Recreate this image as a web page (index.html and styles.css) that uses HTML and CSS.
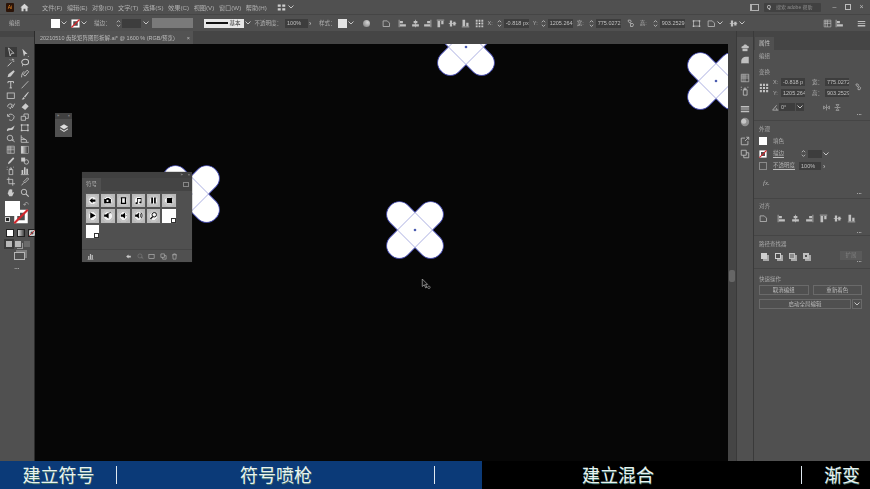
FILE: index.html
```html
<!DOCTYPE html>
<html lang="zh-CN">
<head>
    <meta charset="UTF-8">
    <meta name="viewport" content="width=device-width, initial-scale=1.0">
    <title>Illustrator 符号</title>
    <link rel="stylesheet" href="styles.css">
</head>
<body>
    <svg class="defs" width="0" height="0" aria-hidden="true">
        <!-- 画布上的四瓣图形 -->
        <symbol id="clover" viewBox="-29 -29 58 58">
            <g fill="#fff" stroke="#4c52b4" stroke-width="1.1">
                <rect x="-34.500" y="-12.400" width="69" height="24.800" rx="11.800" transform="rotate(45)"/>
                <rect x="-34.500" y="-12.400" width="69" height="24.800" rx="11.800" transform="rotate(-45)"/>
            </g>
            <g fill="#fff">
                <rect x="-34" y="-11.900" width="68" height="23.800" rx="11.300" transform="rotate(45)"/>
                <rect x="-34" y="-11.900" width="68" height="23.800" rx="11.300" transform="rotate(-45)"/>
            </g>
            <path d="M0 -17.500 17.500 0 0 17.500 -17.500 0Z" fill="#fff" stroke="#a2a6dc" stroke-width="0.9"/>
            <circle r="1.300" fill="#4a5cb0"/>
        </symbol>

        <!-- 工具栏 -->
        <symbol id="t-select" viewBox="0 0 12 12"><path d="M3 1 9.500 7.500H6.600L5 10.800 3 1Z" fill="none" stroke="currentColor"/></symbol>
        <symbol id="t-direct" viewBox="0 0 12 12"><path d="M3 1 9.500 7.500H6.600L5 10.800Z" fill="currentColor"/><path d="M10 10h1v1h-1z" fill="currentColor"/></symbol>
        <symbol id="t-wand" viewBox="0 0 12 12"><path d="M2 10.500 7 5.500M8 1v2M10.500 4H8.500M5 2l1 1M10 1.500 9 2.500" fill="none" stroke="currentColor" stroke-width="1.200"/></symbol>
        <symbol id="t-lasso" viewBox="0 0 12 12"><ellipse cx="6.500" cy="5" rx="4.300" ry="3.400" fill="none" stroke="currentColor" stroke-width="1.300"/><path d="M3.500 7 3 10.500" stroke="currentColor"/></symbol>
        <symbol id="t-pen" viewBox="0 0 12 12"><path d="M9.500 1.500 11 3 6 9.500 2 10.500 3 6.500Z" fill="currentColor"/></symbol>
        <symbol id="t-curve" viewBox="0 0 12 12"><path d="M9 1.500 11 3.500 6.500 9 4 7ZM2 10.500C2 7 3 5 5 3" fill="none" stroke="currentColor" stroke-width="1.100"/></symbol>
        <symbol id="t-type" viewBox="0 0 12 12"><path d="M2.500 2h7v2M6 2v8M4.500 10h3M2.500 4V2" fill="none" stroke="currentColor" stroke-width="1.200"/></symbol>
        <symbol id="t-line" viewBox="0 0 12 12"><path d="M2 10.500 10.500 1.500" stroke="currentColor"/></symbol>
        <symbol id="t-rect" viewBox="0 0 12 12"><rect x="1.500" y="2.500" width="9" height="7" fill="none" stroke="currentColor"/></symbol>
        <symbol id="t-brush" viewBox="0 0 12 12"><path d="M10.500 1 5 7 6.500 8.200 11 2Z M4.500 7.600 6 9C5.500 10.500 3.500 11 2 10.600 3.200 10 3.500 8.600 4.500 7.600Z" fill="currentColor"/></symbol>
        <symbol id="t-shaper" viewBox="0 0 12 12"><path d="M2 6a3.500 3.500 0 0 1 6-2.500L5.500 8.500 3.500 6.500M8 7.500 11 2" fill="none" stroke="currentColor" stroke-width="1.100"/></symbol>
        <symbol id="t-eraser" viewBox="0 0 12 12"><path d="M7 1.500 11 5.500 6.500 10 2 6.500Z" fill="currentColor"/></symbol>
        <symbol id="t-rotate" viewBox="0 0 12 12"><path d="M2.500 5a4 4 0 1 1 1.500 5M2 2.500V5.500H5" fill="none" stroke="currentColor"/></symbol>
        <symbol id="t-scale" viewBox="0 0 12 12"><path d="M1.500 5.500h5.500v5h-5.500zM5 5V2.500H10.500V8H7.500" fill="none" stroke="currentColor"/></symbol>
        <symbol id="t-warp" viewBox="0 0 12 12"><path d="M1 9C3 5 5 8 7 6L11 3 9 8C7 10 4 8 2 10.500Z" fill="currentColor"/></symbol>
        <symbol id="t-free" viewBox="0 0 12 12"><path d="M2 2.500h8v7H2z" fill="none" stroke="currentColor"/><path d="M1 1.500h2v2H1zM9 1.500h2v2H9zM1 8.500h2v2H1zM9 8.500h2v2H9z" fill="currentColor"/></symbol>
        <symbol id="t-builder" viewBox="0 0 12 12"><circle cx="5" cy="5" r="3.500" fill="none" stroke="currentColor"/><path d="M7 7 11 10M8 8.500 10 7" stroke="currentColor"/></symbol>
        <symbol id="t-persp" viewBox="0 0 12 12"><path d="M1.500 1.500V10.500H11M1.500 4 8 7.500V10.500M1.500 7H7" fill="none" stroke="currentColor"/></symbol>
        <symbol id="t-mesh" viewBox="0 0 12 12"><path d="M1.500 1.500h9v9h-9zM1.500 6h9M6 1.500v9M1.500 3.700h9M3.700 1.500v9" fill="none" stroke="currentColor" stroke-width=".8"/></symbol>
        <symbol id="t-grad" viewBox="0 0 12 12"><defs><linearGradient id="gr"><stop offset="0" stop-color="#eee"/><stop offset="1" stop-color="#333"/></linearGradient></defs><rect x="1.500" y="1.500" width="9" height="9" fill="url(#gr)" stroke="#ccc" stroke-width=".6"/></symbol>
        <symbol id="t-dropper" viewBox="0 0 12 12"><path d="M9 1.500 10.500 3 5 9 2.500 10.500 3 8Z" fill="currentColor"/></symbol>
        <symbol id="t-blend" viewBox="0 0 12 12"><rect x="1.500" y="2" width="5" height="5" fill="currentColor"/><circle cx="8" cy="7.500" r="2.800" fill="none" stroke="currentColor"/></symbol>
        <symbol id="t-spray" viewBox="0 0 12 12"><path d="M4 4.500h4.500v6.500H4zM5 2.500h2v2H5z" fill="none" stroke="currentColor"/><path d="M1 1h1v1H1zM9 1h1v1H9zM1 4h1v1H1z" fill="currentColor"/></symbol>
        <symbol id="t-chart" viewBox="0 0 12 12"><path d="M1 11h10" stroke="currentColor"/><path d="M2 5h2v5.500H2zM5 1.500h2v9H5zM8 3.500h2v7H8z" fill="currentColor"/></symbol>
        <symbol id="t-board" viewBox="0 0 12 12"><path d="M3.500 .5V8.500H11.500M1 3H8.500V11" fill="none" stroke="currentColor"/></symbol>
        <symbol id="t-slice" viewBox="0 0 12 12"><path d="M9.500 1 11 2.500 6 7.500 4.500 6ZM5 7 2 10.500" fill="none" stroke="currentColor"/></symbol>
        <symbol id="t-hand" viewBox="0 0 12 12"><path d="M3 5V3h1v1.500V1.800h1.300V4.500V1.500h1.300v3V2h1.300v4L9.500 5 10 6 7.800 10.500H4.200L2 6.500Z" fill="currentColor"/></symbol>
        <symbol id="t-zoom" viewBox="0 0 12 12"><circle cx="5" cy="5" r="3.400" fill="none" stroke="currentColor" stroke-width="1.100"/><path d="M7.500 7.500 11 11" stroke="currentColor" stroke-width="1.400"/></symbol>
        <symbol id="t-trash" viewBox="0 0 12 12"><path d="M2 3h8M4.500 3V1.500h3V3M3 3 3.600 10.500H8.400L9 3" fill="none" stroke="currentColor"/></symbol>

        <!-- 面板栏 -->
        <symbol id="d-libs" viewBox="0 0 12 12"><path d="M2 7.500C1 5.500 3 4.500 4 4.800 4.500 2.500 8 2.500 8.500 4.500 10.500 4.200 11.500 6.500 10 7.500Z" fill="currentColor"/><rect x="3" y="8" width="6" height="3" fill="currentColor"/></symbol>
        <symbol id="d-layers" viewBox="0 0 12 12"><path d="M1.500 10.500V7C1.500 4 4 2 7 2H10.500V10.500Z" fill="currentColor"/><path d="M1.500 10.500h9" stroke="#505050"/></symbol>
        <symbol id="d-lines" viewBox="0 0 12 12"><path d="M1 2.500h10v1.600H1zM1 5.500h10v1H1zM1 8h10v2H1z" fill="currentColor"/></symbol>
        <symbol id="d-sphere" viewBox="0 0 12 12"><circle cx="6" cy="6" r="5" fill="#909090"/><circle cx="4.500" cy="5" r="3" fill="#c6c6c6"/></symbol>
        <symbol id="d-export" viewBox="0 0 12 12"><path d="M6 2.500H1.500V10.500H9.500V6M6 6 10.500 1.500M7.500 1.500H10.500V4.500" fill="none" stroke="currentColor"/></symbol>
        <symbol id="d-stack" viewBox="0 0 12 12"><path d="M1.500 1.500h6v6h-6zM4.500 7.500V10.500H10.500V4.500H7.500" fill="none" stroke="currentColor"/></symbol>
        <symbol id="d-flip-h" viewBox="0 0 12 12"><path d="M6 1v10M1 3.500 4.500 6 1 8.500ZM11 3.500 7.500 6 11 8.500Z" fill="none" stroke="currentColor"/></symbol>
        <symbol id="d-flip-v" viewBox="0 0 12 12"><path d="M1 6h10M3.500 1 6 4.500 8.500 1ZM3.500 11 6 7.500 8.500 11Z" fill="none" stroke="currentColor"/></symbol>
        <symbol id="d-angle" viewBox="0 0 12 12"><path d="M1 10.500H11M1 10.500 8 2M6.500 6.500C8 7.500 8.500 9 8.500 10.500" fill="none" stroke="currentColor" stroke-width="1.200"/></symbol>
        <symbol id="d-link" viewBox="0 0 12 12"><path d="M3 1.500h3l1 2-2 1.500-2-1.500zM6 7l2-1.500 2 1.500-1 3H6zM5 5l2 1.500" fill="none" stroke="currentColor"/></symbol>

        <!-- 对齐 -->
        <symbol id="a-left" viewBox="0 0 12 12"><path d="M1.500 1v10" stroke="currentColor"/><path d="M2.500 2.500h4v3h-4zM2.500 7h8v3h-8z" fill="currentColor"/></symbol>
        <symbol id="a-center" viewBox="0 0 12 12"><path d="M6 1v10" stroke="currentColor"/><path d="M3.500 2.500h5v3h-5zM1.500 7h9v3h-9z" fill="currentColor"/></symbol>
        <symbol id="a-right" viewBox="0 0 12 12"><path d="M10.500 1v10" stroke="currentColor"/><path d="M5.500 2.500h4v3h-4zM1.500 7h8v3h-8z" fill="currentColor"/></symbol>
        <symbol id="a-top" viewBox="0 0 12 12"><path d="M1 1.500h10" stroke="currentColor"/><path d="M2 2.500h3.500v8.500H2zM7 2.500h3v4.500H7z" fill="currentColor"/></symbol>
        <symbol id="a-middle" viewBox="0 0 12 12"><path d="M1 6h10" stroke="currentColor"/><path d="M2.500 2h3v8h-3zM7 3.500h3v5H7z" fill="currentColor"/></symbol>
        <symbol id="a-bottom" viewBox="0 0 12 12"><path d="M1 10.500h10" stroke="currentColor"/><path d="M2 1h3.500v8.500H2zM7 5h3v4.500H7z" fill="currentColor"/></symbol>
        <symbol id="a-key" viewBox="0 0 12 12"><path d="M1.500 2.500H7L10 5.500V10H1.500Z" fill="none" stroke="currentColor"/></symbol>
        <symbol id="refpoint" viewBox="0 0 12 12"><path d="M1 1h2.500v2.500H1zM4.800 1h2.400v2.500H4.800zM8.500 1H11v2.500H8.500zM1 4.800h2.500v2.400H1zM8.500 4.800H11v2.400H8.500zM1 8.500h2.500V11H1zM4.800 8.500h2.400V11H4.800zM8.500 8.500H11V11H8.500z" fill="currentColor"/><rect x="5" y="5" width="2" height="2" fill="#fff"/></symbol>
        <symbol id="spin" viewBox="0 0 6 10"><path d="M1 3.500 3 1.500 5 3.500M1 6.500 3 8.500 5 6.500" fill="none" stroke="currentColor"/></symbol>
        <symbol id="chev" viewBox="0 0 8 6"><path d="M1.500 1.500 4 4 6.500 1.500" fill="none" stroke="currentColor"/></symbol>
        <symbol id="none-swatch" viewBox="0 0 10 10"><rect x=".5" y=".5" width="9" height="9" fill="#fff"/><rect x="2.500" y="2.500" width="5" height="5" fill="#505050"/><path d="M.5 9.500 9.500 .5" stroke="#d3262c" stroke-width="1.400"/></symbol>

        <!-- 符号面板 -->
        <symbol id="s-back" viewBox="0 0 12 12"><path d="M2 6 6 2.500V4.500H10V7.500H6V9.500Z"/></symbol>
        <symbol id="s-cam" viewBox="0 0 12 12"><path fill-rule="evenodd" d="M1.500 4H4L5 2.500H8.500V4H10.500V9.500H1.500ZM6 5A1.500 1.500 0 1 0 6 8 1.500 1.500 0 0 0 6 5Z"/></symbol>
        <symbol id="s-film" viewBox="0 0 12 12"><path fill-rule="evenodd" d="M2.500 1.500H9.500V10.500H2.500ZM4.200 3V9H7.800V3Z"/></symbol>
        <symbol id="s-note" viewBox="0 0 12 12"><path d="M4 2.500H10V8.500A1.500 1.300 0 1 1 9 7.300V4H5V9.500A1.500 1.300 0 1 1 4 8.300Z"/></symbol>
        <symbol id="s-pause" viewBox="0 0 12 12"><path d="M3 2h2.300v8H3zM6.800 2H9v8H6.800z"/></symbol>
        <symbol id="s-stop" viewBox="0 0 12 12"><path d="M2.500 2.500h7v7h-7z"/></symbol>
        <symbol id="s-play" viewBox="0 0 12 12"><path d="M3 2 10 6 3 10Z"/></symbol>
        <symbol id="s-mute" viewBox="0 0 12 12"><path d="M1.500 4.500H4L7.500 2V10L4 7.500H1.500ZM8.500 2 10.500 1 9 4Z"/></symbol>
        <symbol id="s-vol1" viewBox="0 0 12 12"><path d="M2.500 4.500H5L8 2V10L5 7.500H2.500ZM9 4.500 10 6 9 7.500Z"/></symbol>
        <symbol id="s-vol2" viewBox="0 0 12 12"><path d="M1.500 4.500H4L6.500 2V10L4 7.500H1.500Z"/><path d="M8 3.500C9 5 9 7 8 8.500M9.500 2.500C11 4.500 11 7.500 9.500 9.500" fill="none" stroke="#000"/></symbol>
        <symbol id="s-find" viewBox="0 0 12 12"><path d="M7 2A3 3 0 1 1 7 8 3 3 0 0 1 7 2Z" fill="none" stroke="#000" stroke-width="1.200"/><path d="M5 7.500 2 10.500" stroke="#000" stroke-width="1.800"/></symbol>
    </svg>

    <div class="app">
        <header class="menu-bar">
            <span class="ai-logo">Ai</span>
            <svg class="home-icon" viewBox="0 0 12 12"><path d="M6 1 11.500 6H10V11H7.300V7.500H4.700V11H2V6H.5Z" fill="currentColor"/></svg>
            <nav class="menu-items">
                <span>文件(F)</span><span>编辑(E)</span><span>对象(O)</span><span>文字(T)</span><span>选择(S)</span><span>效果(C)</span><span>视图(V)</span><span>窗口(W)</span><span>帮助(H)</span>
            </nav>
            <svg class="workspace-icon" viewBox="0 0 12 12"><path d="M1 2h4v3H1zM1 7h4v3H1zM7 2h4v3H7zM7 7h4v3H7z" fill="currentColor"/></svg>
            <svg class="chev menu-chev"><use href="#chev"/></svg>
            <div class="window-tools">
                <span class="arrange-icon"></span>
                <div class="search-box"><b>Q</b>搜索 adobe 帮助</div>
                <span class="win-btn">&#8211;</span>
                <span class="win-btn win-max"></span>
                <span class="win-btn">&#215;</span>
            </div>
        </header>

        <div class="option-bar">
            <span class="opt-label opt-group">编组</span>
            <span class="swatch"></span>
            <svg class="chev"><use href="#chev"/></svg>
            <svg class="swatch-none"><use href="#none-swatch"/></svg>
            <svg class="chev"><use href="#chev"/></svg>
            <span class="opt-label opt-stroke">描边：</span>
            <svg class="spin"><use href="#spin"/></svg>
            <span class="opt-input opt-weight"></span>
            <svg class="chev"><use href="#chev"/></svg>
            <span class="opt-gray"></span>
            <span class="opt-profile"><i></i>基本</span>
            <svg class="chev"><use href="#chev"/></svg>
            <span class="opt-label opt-opacity">不透明度：</span>
            <span class="opt-input opt-percent">100%</span>
            <span class="opt-arrow">&#8250;</span>
            <span class="opt-label opt-style">样式：</span>
            <span class="swatch swatch-style"></span>
            <svg class="chev"><use href="#chev"/></svg>
            <span class="globe"></span>
            <div class="align-set">
                <svg class="icon"><use href="#a-key"/></svg>
                <svg class="icon gap-l"><use href="#a-left"/></svg>
                <svg class="icon"><use href="#a-center"/></svg>
                <svg class="icon"><use href="#a-right"/></svg>
                <svg class="icon"><use href="#a-top"/></svg>
                <svg class="icon"><use href="#a-middle"/></svg>
                <svg class="icon"><use href="#a-bottom"/></svg>
            </div>
            <svg class="icon ref-top"><use href="#refpoint"/></svg>
            <span class="opt-label lbl-x">X:</span>
            <svg class="spin"><use href="#spin"/></svg>
            <span class="opt-input num">-0.818 px</span>
            <span class="opt-label lbl-y">Y:</span>
            <svg class="spin"><use href="#spin"/></svg>
            <span class="opt-input num">1205.264</span>
            <span class="opt-label lbl-w">宽:</span>
            <svg class="spin"><use href="#spin"/></svg>
            <span class="opt-input num">775.0272</span>
            <svg class="icon lbl-link"><use href="#d-link"/></svg>
            <span class="opt-label lbl-h">高:</span>
            <svg class="spin"><use href="#spin"/></svg>
            <span class="opt-input num">903.2529</span>
            <svg class="icon trail-a"><use href="#t-free"/></svg>
            <svg class="icon trail-b"><use href="#a-key"/></svg>
            <svg class="chev"><use href="#chev"/></svg>
            <svg class="icon trail-f"><use href="#a-middle"/></svg>
            <svg class="chev"><use href="#chev"/></svg>
            <svg class="icon trail-c"><use href="#t-mesh"/></svg>
            <svg class="icon trail-d"><use href="#a-left"/></svg>
            <svg class="icon trail-e"><use href="#d-lines"/></svg>
        </div>

        <div class="workspace">
            <aside class="toolbar">
                <div class="grip"></div>
                <div class="tools">
                    <svg class="active"><use href="#t-select"/></svg><svg><use href="#t-direct"/></svg>
                    <svg><use href="#t-wand"/></svg><svg><use href="#t-lasso"/></svg>
                    <svg><use href="#t-pen"/></svg><svg><use href="#t-curve"/></svg>
                    <svg><use href="#t-type"/></svg><svg><use href="#t-line"/></svg>
                    <svg><use href="#t-rect"/></svg><svg><use href="#t-brush"/></svg>
                    <svg><use href="#t-shaper"/></svg><svg><use href="#t-eraser"/></svg>
                    <svg><use href="#t-rotate"/></svg><svg><use href="#t-scale"/></svg>
                    <svg><use href="#t-warp"/></svg><svg><use href="#t-free"/></svg>
                    <svg><use href="#t-builder"/></svg><svg><use href="#t-persp"/></svg>
                    <svg><use href="#t-mesh"/></svg><svg><use href="#t-grad"/></svg>
                    <svg><use href="#t-dropper"/></svg><svg><use href="#t-blend"/></svg>
                    <svg><use href="#t-spray"/></svg><svg><use href="#t-chart"/></svg>
                    <svg><use href="#t-board"/></svg><svg><use href="#t-slice"/></svg>
                    <svg><use href="#t-hand"/></svg><svg><use href="#t-zoom"/></svg>
                </div>
                <div class="color-box">
                    <svg class="color-stroke"><use href="#none-swatch"/></svg>
                    <span class="color-fill"></span>
                    <span class="color-swap">&#8630;</span>
                    <span class="color-default"></span>
                </div>
                <div class="mode-row">
                    <span class="mode mode-white"></span>
                    <span class="mode mode-grad"></span>
                    <svg class="mode"><use href="#none-swatch"/></svg>
                </div>
                <div class="draw-row">
                    <span class="draw draw-on"></span>
                    <span class="draw"></span>
                    <span class="draw draw-dim"></span>
                </div>
                <div class="screen-btn"></div>
                <div class="more-dots tool-dots">&#8226;&#8226;&#8226;</div>
            </aside>

            <main class="doc">
                <div class="tab-row">
                    <div class="doc-tab">
                        <span>20210510 齿轮矩阵图形拆解.ai* @ 1600 % (RGB/预览)</span>
                        <span class="tab-close">&#215;</span>
                    </div>
                </div>
                <div class="doc-body">
                    <div class="canvas">
                        <svg class="clover clover-top"><use href="#clover"/></svg>
                        <svg class="clover clover-right"><use href="#clover"/></svg>
                        <svg class="clover clover-back"><use href="#clover"/></svg>
                        <svg class="clover clover-main"><use href="#clover"/></svg>

                        <svg class="cursor" viewBox="0 0 12 14"><path d="M1.500 1 8 7.500H5.500L7 11 5.500 11.700 4 8 1.500 10Z" fill="#111" stroke="#b9b9b9" stroke-width=".8"/><circle cx="9.500" cy="11" r="1.500" fill="none" stroke="#b9b9b9" stroke-width=".7"/></svg>

                        <div class="layers-float">
                            <div class="float-head"><span>&#187;</span><span>&#215;</span></div>
                            <svg viewBox="0 0 12 12"><path d="M6 1.500 11 4.500 6 7.500 1 4.500Z" fill="#ddd"/><path d="M1.500 6.500 6 9.300 10.500 6.500 11 7.500 6 10.700 1 7.500Z" fill="#ddd"/></svg>
                        </div>

                        <section class="symbols-panel">
                            <div class="float-head float-head-end"><span>&#187;</span><span>&#215;</span></div>
                            <div class="sym-tabs"><span class="sym-tab">符号</span><span class="sym-menu"></span></div>
                            <div class="sym-grid">
                                <span class="sym"><svg><use href="#s-back"/></svg></span>
                                <span class="sym"><svg><use href="#s-cam"/></svg></span>
                                <span class="sym"><svg><use href="#s-film"/></svg></span>
                                <span class="sym"><svg><use href="#s-note"/></svg></span>
                                <span class="sym"><svg><use href="#s-pause"/></svg></span>
                                <span class="sym"><svg><use href="#s-stop"/></svg></span>
                                <span class="sym"><svg><use href="#s-play"/></svg></span>
                                <span class="sym"><svg><use href="#s-mute"/></svg></span>
                                <span class="sym"><svg><use href="#s-vol1"/></svg></span>
                                <span class="sym"><svg><use href="#s-vol2"/></svg></span>
                                <span class="sym"><svg><use href="#s-find"/></svg></span>
                                <span class="sym sym-blank"></span>
                                <span class="sym sym-blank"></span>
                            </div>
                            <div class="sym-foot">
                                <svg class="icon foot-lib"><use href="#t-chart"/></svg>
                                <svg class="icon foot-place"><use href="#s-back"/></svg>
                                <svg class="icon foot-dim"><use href="#t-builder"/></svg>
                                <svg class="icon"><use href="#t-rect"/></svg>
                                <svg class="icon"><use href="#d-stack"/></svg>
                                <svg class="icon"><use href="#t-trash"/></svg>
                            </div>
                        </section>
                    </div>
                    <div class="v-scroll"><span class="v-thumb"></span></div>
                </div>
            </main>

            <div class="dock">
                <div class="grip"></div>
                <svg class="dock-icon first"><use href="#d-libs"/></svg>
                <svg class="dock-icon"><use href="#d-layers"/></svg>
                <svg class="dock-icon split"><use href="#t-mesh"/></svg>
                <svg class="dock-icon"><use href="#t-spray"/></svg>
                <svg class="dock-icon split"><use href="#d-lines"/></svg>
                <svg class="dock-icon"><use href="#d-sphere"/></svg>
                <svg class="dock-icon split-wide"><use href="#d-export"/></svg>
                <svg class="dock-icon"><use href="#d-stack"/></svg>
            </div>

            <aside class="props">
                <div class="grip"></div>
                <div class="props-tabs"><span class="props-tab">属性</span></div>
                <div class="sec sec-kind"><div class="sec-title">编组</div></div>

                <div class="sec sec-transform">
                    <div class="sec-title">变换</div>
                    <div class="tf-grid">
                        <svg class="icon tf-ref"><use href="#refpoint"/></svg>
                        <div class="tf-fields">
                            <span class="tf-lbl">X:</span><span class="opt-input field">-0.818 p</span>
                            <span class="tf-lbl tf-lbl-r">宽：</span><span class="opt-input field">775.0272</span>
                            <span class="tf-lbl">Y:</span><span class="opt-input field">1205.264</span>
                            <span class="tf-lbl tf-lbl-r">高：</span><span class="opt-input field">903.2529</span>
                        </div>
                        <svg class="icon tf-link"><use href="#d-link"/></svg>
                    </div>
                    <div class="angle-row">
                        <svg class="icon"><use href="#d-angle"/></svg>
                        <span class="opt-input angle">0°</span>
                        <span class="angle-chev"><svg class="chev"><use href="#chev"/></svg></span>
                        <svg class="icon flip flip-a"><use href="#d-flip-h"/></svg>
                        <svg class="icon flip"><use href="#d-flip-v"/></svg>
                    </div>
                    <div class="more-dots">&#8226;&#8226;&#8226;</div>
                </div>

                <div class="sec sec-look">
                    <div class="sec-title">外观</div>
                    <div class="look-row first">
                        <span class="look-swatch"></span><span>填色</span>
                    </div>
                    <div class="look-row">
                        <svg class="look-swatch none"><use href="#none-swatch"/></svg><span class="under">描边</span>
                        <svg class="spin look-spin"><use href="#spin"/></svg>
                        <span class="opt-input look-input"></span>
                        <svg class="chev"><use href="#chev"/></svg>
                    </div>
                    <div class="look-row">
                        <span class="look-swatch ghost"></span><span class="under">不透明度</span>
                        <span class="opt-input look-percent">100%</span>
                        <span class="opt-arrow">&#8250;</span>
                    </div>
                    <div class="fx-row"><i>fx.</i></div>
                    <div class="more-dots">&#8226;&#8226;&#8226;</div>
                </div>

                <div class="sec sec-align">
                    <div class="sec-title">对齐</div>
                    <div class="icon-row">
                        <svg class="icon"><use href="#a-key"/></svg>
                        <svg class="icon gap-l"><use href="#a-left"/></svg>
                        <svg class="icon"><use href="#a-center"/></svg>
                        <svg class="icon"><use href="#a-right"/></svg>
                        <svg class="icon"><use href="#a-top"/></svg>
                        <svg class="icon"><use href="#a-middle"/></svg>
                        <svg class="icon"><use href="#a-bottom"/></svg>
                    </div>
                    <div class="more-dots">&#8226;&#8226;&#8226;</div>
                </div>

                <div class="sec sec-path">
                    <div class="sec-title">路径查找器</div>
                    <div class="path-row">
                        <span class="pf pf-unite"></span>
                        <span class="pf pf-minus"></span>
                        <span class="pf pf-inter"></span>
                        <span class="pf pf-excl"></span>
                        <span class="pf-btn">扩展</span>
                    </div>
                    <div class="more-dots">&#8226;&#8226;&#8226;</div>
                </div>

                <div class="sec sec-quick">
                    <div class="sec-title">快速操作</div>
                    <div class="btn-row">
                        <span class="q-btn">取消编组</span>
                        <span class="q-btn">重新着色</span>
                    </div>
                    <div class="btn-row btn-row-wide">
                        <span class="q-btn q-wide">启动全局编辑</span>
                        <span class="q-btn q-chev"><svg class="chev"><use href="#chev"/></svg></span>
                    </div>
                </div>
            </aside>
        </div>

        <footer class="captions">
            <div class="cap-blue">
                <span class="cap cap-a">建立符号</span>
                <span class="cap cap-b">符号喷枪</span>
            </div>
            <div class="cap-black">
                <span class="cap cap-c">建立混合</span>
                <span class="cap cap-d">渐变</span>
            </div>
        </footer>
    </div>
</body>
</html>
```
FILE: styles.css
```css
html, body {
    margin: 0;
    height: 100%;
    background-color: #000;
    overflow: hidden;
}
.defs {
    position: absolute;
}
.app {
    width: 870px;
    height: 489px;
    display: flex;
    flex-direction: column;
    font-family: "Liberation Sans", "Noto Sans CJK SC", sans-serif;
    font-size: 5.500px;
    color: #b0b0b0;
    background-color: #505050;
}
.app svg {
    display: block;
    flex: none;
}

/* 菜单栏 */
.menu-bar {
    height: 14px;
    display: flex;
    align-items: center;
    background-color: #505050;
    filter: blur(0.4px);
}
.ai-logo {
    width: 8px;
    height: 9px;
    margin-left: 6px;
    background-color: #2b1408;
    color: #f08a24;
    font-size: 5px;
    line-height: 9px;
    text-align: center;
    border-radius: 1px;
}
.home-icon {
    width: 9px;
    height: 9px;
    margin-left: 6px;
    color: #d5d5d5;
}
.menu-items {
    display: flex;
    gap: 4.600px;
    margin-left: 13px;
    font-size: 6.200px;
}
.workspace-icon {
    width: 9px;
    height: 9px;
    margin-left: 10px;
    color: #cfcfcf;
}
.menu-chev {
    margin-left: 1px;
}
.window-tools {
    display: flex;
    align-items: center;
    margin-left: auto;
    padding-right: 2px;
}
.arrange-icon {
    width: 6px;
    height: 5px;
    border: 1px solid #b0b0b0;
    border-left-width: 2px;
}
.search-box {
    width: 54px;
    height: 9px;
    margin: 0 7px 0 5px;
    padding-left: 3px;
    background-color: #414141;
    border-radius: 1px;
    font-size: 5px;
    line-height: 9px;
    color: #8e8e8e;
}
.search-box b {
    margin-right: 5px;
    color: #c5c5c5;
}
.win-btn {
    width: 13px;
    text-align: center;
    font-size: 7px;
    line-height: 10px;
    color: #bcbcbc;
}
.win-max {
    width: 4px;
    height: 4px;
    margin: 0 4px;
    border: 1px solid #bcbcbc;
}

/* 控制栏 */
.option-bar {
    height: 17px;
    display: flex;
    align-items: center;
    background-color: #505050;
    border-top: 1px solid #454545;
    box-sizing: border-box;
    filter: blur(0.4px);
}
.opt-label {
    flex: none;
    white-space: nowrap;
}
.opt-group { margin: 0 31px 0 9px; }
.opt-stroke { margin: 0 5px 0 6px; }
.opt-opacity { margin: 0 3px; }
.opt-style { margin: 0 2px 0 5px; }
.lbl-x { margin: 0 4px 0 4px; }
.lbl-y { margin: 0 3px 0 4px; }
.lbl-w { margin: 0 5px 0 4px; }
.lbl-link { margin: 0 5px 0 5px; }
.lbl-h { margin-right: 6px; }
.swatch {
    width: 9px;
    height: 9px;
    background-color: #fff;
}
.swatch-style { background-color: #e3e3e3; }
.swatch-none {
    width: 9px;
    height: 9px;
    margin-left: 3px;
}
.chev {
    width: 8px;
    height: 6px;
    color: #c4c4c4;
}
.spin {
    width: 5px;
    height: 9px;
    color: #c4c4c4;
}
.opt-input {
    flex: none;
    display: block;
    height: 9px;
    background-color: #3d3d3d;
    font-size: 5.500px;
    line-height: 9px;
    padding-left: 2px;
    box-sizing: border-box;
    color: #c0c0c0;
    white-space: nowrap;
    overflow: hidden;
}
.opt-weight { width: 19px; margin: 0 1px; }
.opt-gray {
    width: 41px;
    height: 10px;
    margin-left: 2px;
    background-color: #7a7a7a;
}
.opt-profile {
    width: 40px;
    height: 9px;
    margin-left: 11px;
    display: flex;
    align-items: center;
    gap: 2px;
    padding-left: 2px;
    box-sizing: border-box;
    background-color: #e6e6e6;
    color: #333;
    font-size: 5.500px;
}
.opt-profile i {
    width: 22px;
    height: 1.500px;
    background-color: #111;
}
.opt-percent { width: 23px; }
.opt-arrow {
    flex: none;
    width: 5px;
    margin-left: 1px;
    font-size: 7px;
    color: #c4c4c4;
}
.globe {
    width: 7px;
    height: 7px;
    margin-left: 8px;
    border-radius: 50%;
    background: radial-gradient(circle at 65% 35%, #d5d5d5, #777);
}
.align-set {
    display: flex;
    gap: 3.500px;
    margin-left: 12px;
}
.icon {
    width: 9px;
    height: 9px;
    color: #c0c0c0;
    flex: none;
}
.gap-l { margin-left: 4px; }
.ref-top { margin-left: 5px; }
.num { width: 25px; margin-left: 2px; }
.trail-a { margin-left: 7px; }
.trail-b { margin-left: 6px; }
.trail-f { margin-left: 5px; }
.trail-c { margin-left: 77px; }
.trail-d { margin-left: 3px; }
.trail-e { margin-left: 13px; }

/* 主工作区 */
.workspace {
    flex: 1;
    min-height: 0;
    display: flex;
}
.grip {
    height: 6px;
    background-color: #454545;
    flex: none;
}
.toolbar {
    width: 35px;
    flex: none;
    background-color: #505050;
    border-right: 1px solid #2c2c2c;
    box-sizing: border-box;
    filter: blur(0.35px);
}
.tools {
    display: grid;
    grid-template-columns: 14px 14px;
    grid-auto-rows: 10.800px;
    padding: 10px 0 0 4px;
    justify-items: center;
    align-items: center;
}
.tools svg {
    width: 9.500px;
    height: 9.500px;
    color: #cbcbcb;
}
.tools svg.active {
    width: 12px;
    height: 10px;
    background-color: #3a3a3a;
}
.color-box {
    position: relative;
    height: 22px;
    margin-top: 3px;
}
.color-fill {
    position: absolute;
    left: 5px;
    top: 0;
    width: 15px;
    height: 15px;
    background-color: #fff;
}
.color-stroke {
    position: absolute;
    left: 13px;
    top: 8px;
    width: 16px;
    height: 15px;
}
.color-swap {
    position: absolute;
    left: 23px;
    top: 0;
    font-size: 7px;
    line-height: 7px;
}
.color-default {
    position: absolute;
    left: 5px;
    top: 16px;
    width: 5px;
    height: 5px;
    background-color: #222;
    border: 1px solid #cfcfcf;
    box-sizing: border-box;
}
.mode-row, .draw-row {
    display: flex;
    gap: 3px;
    margin: 6px 0 0 6px;
}
.mode {
    width: 6px;
    height: 6px;
    border: 1px solid #222;
    flex: none;
}
.mode-white { background-color: #fff; }
.mode-grad { background: linear-gradient(90deg, #ddd, #444); }
.draw-row { margin-top: 4px; }
.draw {
    width: 6px;
    height: 6px;
    background-color: #b8b8b8;
    box-shadow: 1px 1px 0 #505050, 2px 2px 0 #999;
}
.draw-on {
    outline: 2px solid #3a3a3a;
}
.draw-dim { background-color: #6b6b6b; box-shadow: none; }
.screen-btn {
    width: 9px;
    height: 6px;
    margin: 5px 0 0 14px;
    border: 1px solid #b5b5b5;
    box-shadow: 2px -2px 0 #7d7d7d;
}
.more-dots {
    font-size: 3.500px;
    line-height: 5px;
    letter-spacing: 0.4px;
    color: #c6c6c6;
    text-align: right;
}
.tool-dots {
    margin-top: 7px;
    text-align: center;
}

/* 文档区 */
.doc {
    flex: 1;
    min-width: 0;
    display: flex;
    flex-direction: column;
}
.tab-row {
    height: 13px;
    flex: none;
    background-color: #454545;
}
.doc-tab {
    width: 158px;
    height: 13px;
    display: flex;
    align-items: center;
    justify-content: space-between;
    padding: 0 3px 0 5px;
    box-sizing: border-box;
    background-color: #535353;
    color: #bcbcbc;
    font-size: 5.500px;
    white-space: nowrap;
    filter: blur(0.35px);
}
.doc-body {
    flex: 1;
    min-height: 0;
    display: flex;
}
.canvas {
    flex: 1;
    position: relative;
    overflow: hidden;
    background-color: #060606;
}
.v-scroll {
    width: 8px;
    flex: none;
    background-color: #454545;
}
.v-thumb {
    display: block;
    width: 6px;
    height: 12px;
    margin: 226px 0 0 1px;
    background-color: #666;
    border-radius: 2px;
}

/* 画布内容，位置就是内容本身 */
.clover {
    position: absolute;
    width: 58px;
    height: 58px;
    filter: blur(0.35px);
}
.clover-main { left: 351px; top: 157px; }
.clover-top { left: 402px; top: -26px; }
.clover-right { left: 652px; top: 8px; }
.clover-back { left: 127px; top: 121px; }
.cursor {
    position: absolute;
    left: 386px;
    top: 234px;
    width: 10px;
    height: 12px;
    filter: blur(0.3px);
}

/* 浮动面板 */
.layers-float {
    position: absolute;
    left: 20px;
    top: 69px;
    width: 17px;
    height: 24px;
    background-color: #505050;
}
.layers-float svg {
    width: 10px;
    height: 10px;
    margin: 4px auto 0;
}
.float-head {
    height: 6px;
    padding: 0 2px;
    display: flex;
    justify-content: space-between;
    background-color: #404040;
    font-size: 4px;
    line-height: 6px;
    color: #b0b0b0;
}
.float-head-end {
    justify-content: flex-end;
    gap: 5px;
}
.symbols-panel {
    position: absolute;
    left: 47px;
    top: 128px;
    width: 110px;
    height: 90px;
    display: flex;
    flex-direction: column;
    background-color: #505050;
    box-shadow: 0 0 1px #222;
    filter: blur(0.3px);
}
.sym-tabs {
    height: 13px;
    flex: none;
    display: flex;
    justify-content: space-between;
    align-items: center;
    background-color: #444;
    padding-right: 3px;
}
.sym-tab {
    width: 19px;
    line-height: 13px;
    text-align: center;
    background-color: #505050;
}
.sym-menu {
    width: 4px;
    height: 3px;
    border: 1px solid #888;
}
.sym-grid {
    flex: 1;
    display: grid;
    grid-template-columns: repeat(6, 15.300px);
    grid-auto-rows: 15.300px;
    align-content: start;
    padding: 2px 0 0 3px;
}
.sym {
    display: flex;
    align-items: center;
    justify-content: center;
    background: radial-gradient(circle, #f3f3f3 0 38%, #c4c4c4 40% 62%, #b9b9b9 64%);
    border: 0.5px solid #555;
    box-sizing: border-box;
}
.sym svg {
    width: 9px;
    height: 9px;
    fill: #000;
}
.sym-blank {
    position: relative;
    background: #fff;
}
.sym-blank::after {
    content: "";
    position: absolute;
    right: 0;
    bottom: 0;
    width: 3px;
    height: 3px;
    background-color: #fff;
    border: 1px solid #333;
}
.sym-foot {
    height: 12px;
    flex: none;
    display: flex;
    align-items: center;
    justify-content: flex-end;
    gap: 4.500px;
    padding-right: 14px;
    border-top: 1px solid #454545;
}
.sym-foot .icon {
    width: 7px;
    height: 7px;
    fill: #c8c8c8;
}
.foot-lib { margin-right: auto; margin-left: 5px; }
.foot-dim { opacity: 0.4; }

/* 面板栏 */
.dock {
    width: 18px;
    flex: none;
    display: flex;
    flex-direction: column;
    align-items: center;
    background-color: #505050;
    border-left: 1px solid #3a3a3a;
    border-right: 1px solid #3a3a3a;
    box-sizing: border-box;
    filter: blur(0.3px);
}
.dock .grip {
    align-self: stretch;
}
.dock-icon {
    width: 10px;
    height: 10px;
    margin-top: 3px;
    color: #c0c0c0;
}
.dock-icon.first { margin-top: 5px; }
.dock-icon.split { margin-top: 8px; }
.dock-icon.split-wide { margin-top: 9px; }

/* 属性面板 */
.props {
    width: 116px;
    flex: none;
    background-color: #505050;
    filter: blur(0.35px);
}
.props-tabs {
    height: 13px;
    background-color: #454545;
}
.props-tab {
    display: block;
    width: 19px;
    margin-left: 1px;
    line-height: 13px;
    text-align: center;
    background-color: #505050;
    color: #c6c6c6;
}
.sec {
    padding: 0 8px 0 5px;
    box-sizing: border-box;
    border-bottom: 1px solid #454545;
}
.sec-title {
    line-height: 10px;
    color: #a8a8a8;
}
.sec-kind { height: 14px; padding-top: 1px; border-bottom: 0; }
.sec-transform { height: 57px; padding-top: 3px; }
.sec-look { height: 78px; padding-top: 3px; }
.sec-align { height: 37px; padding-top: 2px; }
.sec-path { height: 33px; padding-top: 3px; }
.sec-quick { padding-top: 5px; border-bottom: 0; }

.tf-grid {
    display: flex;
    align-items: center;
    margin-top: -1px;
}
.tf-ref {
    width: 10px;
    height: 10px;
    margin-top: 2px;
}
.tf-fields {
    display: grid;
    grid-template-columns: 8px 24px 20px 24px;
    grid-auto-rows: 11px;
    align-items: center;
    margin-left: 4px;
}
.tf-lbl {
    white-space: nowrap;
}
.tf-lbl-r {
    padding-left: 7px;
}
.field {
    height: 8px;
    line-height: 8px;
}
.tf-link {
    width: 8px;
    height: 8px;
    margin: 0 0 0 5px;
}
.angle-row {
    display: flex;
    align-items: center;
    margin: 4px 0 0 13px;
    height: 10px;
}
.angle-row .icon {
    width: 7px;
    height: 7px;
}
.angle {
    width: 16px;
    height: 8px;
    line-height: 8px;
}
.angle-chev {
    width: 8px;
    height: 8px;
    display: flex;
    align-items: center;
    background-color: #3d3d3d;
    margin-left: 1px;
}
.flip { margin-left: 4px; }
.flip-a { margin-left: 19px; }
.sec-transform .more-dots { margin-top: 1px; }

.look-row {
    display: flex;
    align-items: center;
    gap: 6px;
    height: 12.500px;
}
.look-row.first { margin-top: 1px; }
.look-swatch {
    width: 8px;
    height: 8px;
    flex: none;
    background-color: #fff;
}
.look-swatch.none { background: none; }
.look-swatch.ghost {
    background-color: #505050;
    border: 1px solid #8a8a8a;
    box-sizing: border-box;
}
.under {
    border-bottom: 0.5px solid #bdbdbd;
    line-height: 7px;
}
.look-spin { margin-left: 11px; }
.look-input {
    width: 14px;
    height: 8px;
    margin-left: -4px;
}
.look-row .chev { margin-left: -6px; }
.look-percent {
    width: 22px;
    height: 8px;
    line-height: 8px;
    margin-left: -2px;
}
.look-row .opt-arrow { margin-left: -4px; }
.fx-row {
    margin: 6px 0 0 4px;
    font-family: "Liberation Serif", serif;
    font-size: 7px;
    line-height: 8px;
}
.sec-look .more-dots { margin-top: 5px; }

.icon-row {
    display: flex;
    align-items: center;
    gap: 5px;
    margin-top: 2px;
    height: 10px;
}
.sec-align .more-dots { margin-top: 8px; }

.path-row {
    display: flex;
    align-items: center;
    gap: 6px;
    margin: 2px 0 0 2px;
}
.pf {
    position: relative;
    width: 6px;
    height: 6px;
    margin-right: 2px;
    background-color: #d0d0d0;
    box-shadow: 2px 2px 0 #a9a9a9;
}
.pf-minus { background-color: #505050; border: 1px solid #d0d0d0; box-sizing: border-box; }
.pf-inter { background-color: #8a8a8a; border: 1px solid #c0c0c0; box-sizing: border-box; }
.pf-excl { background-color: #505050; border: 2px solid #c0c0c0; box-sizing: border-box; }
.pf-btn {
    width: 22px;
    height: 9px;
    margin-left: auto;
    text-align: center;
    line-height: 9px;
    background-color: #5a5a5a;
    color: #7e7e7e;
}
.sec-path .more-dots { margin-top: 0; }

.btn-row {
    display: flex;
    gap: 4px;
    margin-top: 1px;
}
.btn-row-wide {
    gap: 1px;
    margin-top: 4px;
}
.q-btn {
    flex: 1;
    height: 10px;
    display: flex;
    align-items: center;
    justify-content: center;
    border: 1px solid #6a6a6a;
    box-sizing: border-box;
    color: #bcbcbc;
}
.q-wide { flex: none; width: 92px; }
.q-chev { flex: none; width: 10px; }

/* 底部字幕 */
.captions {
    height: 28px;
    flex: none;
    display: flex;
}
.cap-blue {
    width: 482px;
    display: flex;
    background-color: #0b3a78;
}
.cap-black {
    flex: 1;
    display: flex;
    background-color: #000;
}
.cap {
    display: block;
    font-family: "Noto Sans CJK SC", sans-serif;
    font-size: 18px;
    line-height: 26px;
    color: #e8f2f0;
    text-align: center;
    text-shadow: 0.5px 0.5px 0 #3f6f6a;
    box-sizing: border-box;
    position: relative;
}
.cap::after {
    content: "";
    position: absolute;
    right: 0;
    top: 5px;
    bottom: 5px;
    width: 1px;
    background-color: #dfe8f0;
}
.cap-a { width: 117px; }
.cap-b { width: 318px; }
.cap-c { width: 320px; padding-right: 48px; }
.cap-d { flex: 1; padding-left: 12px; }
.cap-d::after { display: none; }
```
